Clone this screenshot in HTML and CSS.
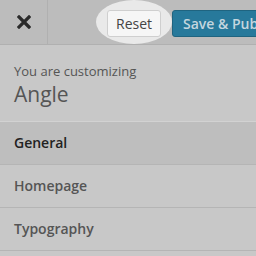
FILE: index.html
```html
<!DOCTYPE html>
<html lang="en">
<head>
  <meta charset="UTF-8">
  <title>Customize</title>
  <link rel="stylesheet" href="styles.css">
</head>
<body>
  <div class="cz-panel">
    <!-- Header -->
    <div class="cz-header">
      <div class="cz-close">
        <svg width="14" height="14" viewBox="0 0 14 14">
          <path d="M2 2 L12 12 M12 2 L2 12" stroke="#2b2b2b" stroke-width="3.2" stroke-linecap="square"/>
        </svg>
      </div>
      <div class="cz-actions">
        <div class="cz-spot">
          <button class="cz-reset">Reset</button>
        </div>
        <button class="cz-save">Save &amp; Publish</button>
      </div>
    </div>

    <!-- Info -->
    <div class="cz-info">
      <span class="cz-info-label">You are customizing</span>
      <span class="cz-info-title">Angle</span>
    </div>

    <!-- Sections -->
    <ul class="cz-sections">
      <li class="cz-section active">General</li>
      <li class="cz-section">Homepage</li>
      <li class="cz-section">Typography</li>
    </ul>
  </div>
</body>
</html>
```

FILE: styles.css
```css
* {
  margin: 0;
  padding: 0;
  box-sizing: border-box;
}

body {
  width: 256px;
  height: 256px;
  overflow: hidden;
  background: #c8c8c8;
  font-family: "Open Sans", sans-serif;
}

.cz-header {
  display: flex;
  height: 45px;
  background: #bcbcbc;
  border-bottom: 1px solid #b0b0b0;
}

.cz-close {
  width: 48px;
  flex: none;
  display: flex;
  justify-content: center;
  align-items: center;
  border-right: 1px solid #b0b0b0;
}

.cz-actions {
  display: flex;
  align-items: center;
  flex: 1;
  min-width: 0;
  overflow: hidden;
  padding-left: 48px;
  white-space: nowrap;
}

.cz-spot {
  width: 76px;
  height: 44px;
  flex: none;
  border-radius: 50%;
  background: #e9e9e9;
  display: flex;
  justify-content: center;
  align-items: center;
}

.cz-reset {
  height: 27px;
  width: 54px;
  font-family: "Open Sans", sans-serif;
  font-size: 14px;
  color: #444;
  background: #f6f6f6;
  border: 1px solid #cfcfcf;
  border-radius: 3px;
  margin-top: 2px;
}

.cz-save {
  flex: none;
  height: 27px;
  padding: 0 10px;
  margin-top: 2px;
  font-family: "Open Sans", sans-serif;
  font-size: 14px;
  font-weight: 600;
  color: #c4d6df;
  background: #27799b;
  border: 1px solid #1f6480;
  border-radius: 3px;
}

.cz-info {
  display: flex;
  flex-direction: column;
  padding: 17px 14px 0;
  height: 76px;
  color: #555;
}

.cz-info-label {
  font-size: 13px;
  line-height: 18px;
}

.cz-info-title {
  font-size: 21px;
  line-height: 28px;
  color: #555;
}

.cz-sections {
  list-style: none;
  border-top: 1px solid #d2d2d2;
}

.cz-section {
  height: 43px;
  line-height: 42px;
  padding-left: 14px;
  font-size: 14px;
  font-weight: 600;
  color: #555;
  border-bottom: 1px solid #b5b5b5;
}

.cz-section.active {
  background: #bebebe;
  color: #222;
}
```
